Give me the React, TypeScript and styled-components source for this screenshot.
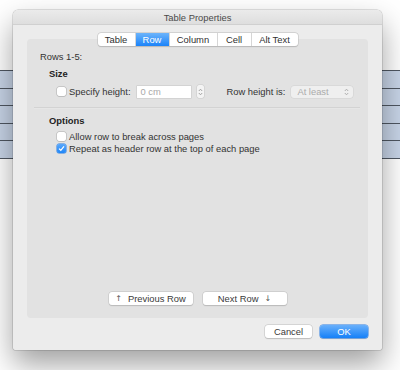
import styled, { createGlobalStyle } from 'styled-components';

const GlobalStyle = createGlobalStyle`
  html, body {
    margin: 0;
    padding: 0;
    background: #ffffff;
  }
  body {
    font-family: "Liberation Sans", Arial, sans-serif;
    -webkit-font-smoothing: antialiased;
  }
`;

const Page = styled.div`
  position: relative;
  width: 400px;
  height: 370px;
  overflow: hidden;
  background: #ffffff;
`;

const DocTable = styled.div`
  margin-top: 70px;
  display: flex;
  flex-direction: column;
  border-bottom: 1px solid #4f5762;
`;

const DocRow = styled.div`
  height: 16.6px;
  background: #c8d5e8;
  border-top: 1px solid #4f5762;
`;

const Dialog = styled.div`
  position: absolute;
  left: 13px;
  top: 10px;
  width: 369px;
  height: 340px;
  display: flex;
  flex-direction: column;
  background: #ececec;
  border-radius: 5px 5px 2px 2px;
  box-shadow: 0 14px 30px rgba(0, 0, 0, 0.38), 0 0 0 0.5px rgba(0, 0, 0, 0.22);
  overflow: hidden;
`;

const TitleBar = styled.div`
  height: 15px;
  display: flex;
  align-items: center;
  justify-content: center;
  background: linear-gradient(#ebebeb, #dedede);
  border-bottom: 1px solid #d0d0d0;
  box-sizing: border-box;
  font-size: 9.4px;
  color: #4a4a4a;
`;

const Body = styled.div`
  flex: 1;
  display: flex;
  flex-direction: column;
  padding: 8px 14px 12px;
`;

const TabsRow = styled.div`
  display: flex;
  justify-content: center;
  margin-bottom: -7px;
  position: relative;
  z-index: 1;
`;

const Segmented = styled.div`
  display: flex;
  height: 13px;
  background: #ffffff;
  border-radius: 3px;
  box-shadow: 0 0 0 0.5px #bdbdbd, 0 0.5px 1px rgba(0, 0, 0, 0.2);
  overflow: hidden;
`;

const Tab = styled.div<{ $active?: boolean; $w: number }>`
  width: ${(p) => p.$w}px;
  display: flex;
  align-items: center;
  justify-content: center;
  font-size: 9.4px;
  color: ${(p) => (p.$active ? '#ffffff' : '#2f2f2f')};
  background: ${(p) => (p.$active ? 'linear-gradient(#6cb4fb, #1b83f9)' : 'transparent')};
  border-left: 1px solid #d6d6d6;
  &:first-child {
    border-left: none;
  }
`;

const GroupBox = styled.div`
  flex: 1;
  display: flex;
  flex-direction: column;
  padding: 12px 13px 13px;
  background: #e2e2e2;
  border-radius: 4px;
  color: #333333;
  font-size: 9.4px;
`;

const Label = styled.div`
  height: 12px;
  line-height: 12px;
  white-space: nowrap;
`;

const Heading = styled.div<{ $top: number }>`
  margin: ${(p) => p.$top}px 0 0 9px;
  height: 12px;
  line-height: 12px;
  font-weight: bold;
  color: #222222;
`;

const ControlRow = styled.div`
  margin: 5px 0 0 17px;
  height: 13px;
  display: flex;
  align-items: center;
`;

const CheckRow = styled.label<{ $top: number }>`
  margin: ${(p) => p.$top}px 0 0 17px;
  height: 12.5px;
  display: flex;
  align-items: center;
  gap: 3px;
  white-space: nowrap;
`;

const Box = styled.span<{ $checked?: boolean }>`
  width: 9px;
  height: 9px;
  flex: none;
  box-sizing: border-box;
  border-radius: 2px;
  display: flex;
  align-items: center;
  justify-content: center;
  background: ${(p) => (p.$checked ? 'linear-gradient(#5aa8fb, #1f86f8)' : '#ffffff')};
  box-shadow: ${(p) =>
    p.$checked ? '0 0 0 0.5px #2d7fe0' : '0 0 0 0.5px #acacac, 0 0.5px 0.5px rgba(0,0,0,0.15)'};
`;

const Field = styled.div`
  width: 54px;
  height: 12px;
  margin-left: 6px;
  box-sizing: border-box;
  padding-left: 4px;
  display: flex;
  align-items: center;
  background: #ffffff;
  box-shadow: 0 0 0 0.5px #c4c4c4;
  color: #a8a8a8;
`;

const Stepper = styled.div`
  width: 7px;
  height: 13px;
  margin-left: 6px;
  display: flex;
  align-items: center;
  justify-content: center;
  background: #f4f4f4;
  border-radius: 2px;
  box-shadow: 0 0 0 0.5px #c8c8c8;
`;

const SideLabel = styled.span`
  margin-left: 23px;
  white-space: nowrap;
`;

const Select = styled.div`
  width: 62px;
  height: 12px;
  margin-left: 6px;
  box-sizing: border-box;
  padding: 0 4px 0 6px;
  display: flex;
  align-items: center;
  justify-content: space-between;
  background: #efefef;
  border-radius: 3px;
  box-shadow: 0 0 0 0.5px #d0d0d0;
  color: #ababab;
`;

const Separator = styled.div`
  margin: 9px -5px 0 -6px;
  height: 1px;
  background: #d3d3d3;
  border-bottom: 1px solid #e6e6e6;
`;

const NavRow = styled.div`
  margin-top: auto;
  display: flex;
  justify-content: center;
  gap: 10px;
`;

const PushButton = styled.div<{ $primary?: boolean; $w: number }>`
  width: ${(p) => p.$w}px;
  height: 13px;
  display: flex;
  align-items: center;
  justify-content: center;
  gap: 6px;
  font-size: 9.4px;
  border-radius: 3px;
  color: ${(p) => (p.$primary ? '#ffffff' : '#3a3a3a')};
  background: ${(p) => (p.$primary ? 'linear-gradient(#69b0fb, #1580f8)' : '#ffffff')};
  box-shadow: ${(p) =>
    p.$primary
      ? '0 0 0 0.5px #2e82ea, 0 0.5px 1px rgba(0,0,0,0.2)'
      : '0 0 0 0.5px #c2c2c2, 0 0.5px 1px rgba(0,0,0,0.2)'};
`;

const Arrow = styled.span`
  font-family: "DejaVu Sans", sans-serif;
  font-size: 8px;
  color: #555555;
`;

const Footer = styled.div`
  margin-top: 7px;
  display: flex;
  justify-content: flex-end;
  gap: 8px;
`;

function Chevrons({ color }: { color: string }) {
  return (
    <svg width="5" height="8" viewBox="0 0 5 8">
      <path d="M0.8 3 L2.5 1.2 L4.2 3" fill="none" stroke={color} strokeWidth="0.9" />
      <path d="M0.8 5 L2.5 6.8 L4.2 5" fill="none" stroke={color} strokeWidth="0.9" />
    </svg>
  );
}

function Check() {
  return (
    <svg width="7" height="7" viewBox="0 0 7 7">
      <path d="M1 3.6 L2.8 5.3 L6 1.3" fill="none" stroke="#ffffff" strokeWidth="1.2" />
    </svg>
  );
}

const tabs = [
  { name: 'Table', w: 37 },
  { name: 'Row', w: 33 },
  { name: 'Column', w: 47 },
  { name: 'Cell', w: 33 },
  { name: 'Alt Text', w: 46 },
];

function App() {
  return (
    <Page>
      <GlobalStyle />
      <DocTable>
        {[0, 1, 2, 3, 4].map((i) => (
          <DocRow key={i} />
        ))}
      </DocTable>
      <Dialog>
        <TitleBar>Table Properties</TitleBar>
        <Body>
          <TabsRow>
            <Segmented>
              {tabs.map((t) => (
                <Tab key={t.name} $w={t.w} $active={t.name === 'Row'}>
                  {t.name}
                </Tab>
              ))}
            </Segmented>
          </TabsRow>
          <GroupBox>
            <Label>Rows 1-5:</Label>
            <Heading $top={5}>Size</Heading>
            <ControlRow>
              <Box />
              <span style={{ marginLeft: 3 }}>Specify height:</span>
              <Field>0 cm</Field>
              <Stepper>
                <Chevrons color="#9a9a9a" />
              </Stepper>
              <SideLabel>Row height is:</SideLabel>
              <Select>
                <span>At least</span>
                <Chevrons color="#a8a8a8" />
              </Select>
            </ControlRow>
            <Separator />
            <Heading $top={6}>Options</Heading>
            <CheckRow $top={3}>
              <Box />
              Allow row to break across pages
            </CheckRow>
            <CheckRow $top={0}>
              <Box $checked>
                <Check />
              </Box>
              Repeat as header row at the top of each page
            </CheckRow>
            <NavRow>
              <PushButton $w={84}>
                <Arrow>↑</Arrow>
                Previous Row
              </PushButton>
              <PushButton $w={84}>
                Next Row
                <Arrow>↓</Arrow>
              </PushButton>
            </NavRow>
          </GroupBox>
          <Footer>
            <PushButton $w={47}>Cancel</PushButton>
            <PushButton $w={48} $primary>
              OK
            </PushButton>
          </Footer>
        </Body>
      </Dialog>
    </Page>
  );
}

export default App;
